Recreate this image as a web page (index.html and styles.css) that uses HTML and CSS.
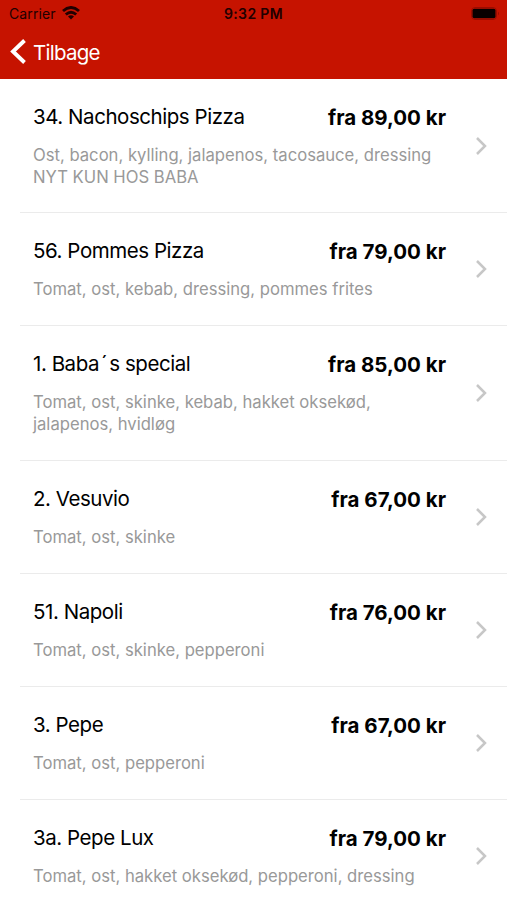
FILE: index.html
```html
<!DOCTYPE html>
<html lang="da">
<head>
<meta charset="utf-8">
<title>Menu</title>
<link rel="stylesheet" href="styles.css">
</head>
<body>
<header class="header">
  <div class="status">
    <div class="carrier"><span class="carrier-name">Carrier</span>
      <svg class="wifi" width="18" height="14" viewBox="0 0 18 14" fill="none" stroke="#210000" stroke-width="2.900"><path d="M1 5Q9-2 17 5M3.800 8.500Q9 4 14.200 8.500"/><path d="M9 13.500L6 10.500Q9 8 12 10.500Z" fill="#210000" stroke="none"/></svg>
    </div>
    <span class="clock">9:32 PM</span>
    <svg class="battery" width="29" height="13" viewBox="0 0 29 13"><rect x=".5" y=".5" width="25" height="12" rx="3.500" fill="none" stroke="#9b0c00"/><rect x="1.500" y="1.800" width="23" height="9.400" rx="1.800" fill="#080000"/><path d="M27 4.500Q29 6.500 27 8.500Z" fill="#9b0c00"/></svg>
  </div>
  <nav class="nav">
    <svg class="back" width="16" height="28" viewBox="0 0 16 28" fill="none" stroke="#fff" stroke-width="3.900"><path d="M14.500 2.500L3 13.500L14.500 24.500"/></svg>
    <span class="back-label">Tilbage</span>
  </nav>
</header>
<main class="list">
  <article class="item tall first"><div class="info"><div class="line"><h2 class="name">34. Nachoschips Pizza</h2><span class="price">fra 89,00 kr</span></div><p class="desc">Ost, bacon, kylling, jalapenos, tacosauce, dressing<br>NYT KUN HOS BABA</p></div><svg class="chevron" viewBox="0 0 12 20"><path d="M2 2L10 10L2 18"/></svg></article>
  <article class="item"><div class="info"><div class="line"><h2 class="name">56. Pommes Pizza</h2><span class="price">fra 79,00 kr</span></div><p class="desc">Tomat, ost, kebab, dressing, pommes frites</p></div><svg class="chevron" viewBox="0 0 12 20"><path d="M2 2L10 10L2 18"/></svg></article>
  <article class="item tall"><div class="info"><div class="line"><h2 class="name">1. Baba<span class="accent">´</span>s special</h2><span class="price">fra 85,00 kr</span></div><p class="desc">Tomat, ost, skinke, kebab, hakket oksekød,<br>jalapenos, hvidløg</p></div><svg class="chevron" viewBox="0 0 12 20"><path d="M2 2L10 10L2 18"/></svg></article>
  <article class="item"><div class="info"><div class="line"><h2 class="name">2. Vesuvio</h2><span class="price">fra 67,00 kr</span></div><p class="desc">Tomat, ost, skinke</p></div><svg class="chevron" viewBox="0 0 12 20"><path d="M2 2L10 10L2 18"/></svg></article>
  <article class="item"><div class="info"><div class="line"><h2 class="name">51. Napoli</h2><span class="price">fra 76,00 kr</span></div><p class="desc">Tomat, ost, skinke, pepperoni</p></div><svg class="chevron" viewBox="0 0 12 20"><path d="M2 2L10 10L2 18"/></svg></article>
  <article class="item"><div class="info"><div class="line"><h2 class="name">3. Pepe</h2><span class="price">fra 67,00 kr</span></div><p class="desc">Tomat, ost, pepperoni</p></div><svg class="chevron" viewBox="0 0 12 20"><path d="M2 2L10 10L2 18"/></svg></article>
  <article class="item"><div class="info"><div class="line"><h2 class="name">3a. Pepe Lux</h2><span class="price">fra 79,00 kr</span></div><p class="desc">Tomat, ost, hakket oksekød, pepperoni, dressing</p></div><svg class="chevron" viewBox="0 0 12 20"><path d="M2 2L10 10L2 18"/></svg></article>
</main>
</body>
</html>
```
FILE: styles.css
```css
* { box-sizing: border-box; }
body { margin: 0; height: 900px; overflow: hidden; background: #fff; font-family: Inter, "Liberation Sans", sans-serif; }
.header { height: 79px; background: #c61300; }
.status { height: 27px; padding: 0 7px 0 9px; display: grid; grid-template-columns: 1fr auto 1fr; align-items: center; color: #210000; font-size: 14px; }
.carrier { display: flex; align-items: center; gap: 6px; letter-spacing: .1px; }
.wifi { margin-top: -2px; }
.clock { margin-left: -2px; font-weight: 600; letter-spacing: .35px; }
.battery { justify-self: end; }
.nav { height: 50px; padding-left: 10px; display: flex; align-items: center; gap: 7px; color: #fff; font-size: 20.500px; letter-spacing: -.75px; }
.item { height: 113px; margin-left: 20px; padding: 24px 20px 0 13px; border-bottom: 1px solid #ebebeb; display: flex; }
.tall { height: 135px; }
.first { height: 134px; }
.info { width: 413px; }
.line { display: flex; justify-content: space-between; height: 28px; line-height: 28px; }
.name { margin: 0; font-size: 20.500px; font-weight: 400; letter-spacing: -.45px; white-space: nowrap; }
.accent { margin: 0 2px; }
.price { padding-top: 1px; font-size: 20.500px; font-weight: 700; white-space: nowrap; }
.desc { margin: 13px 0 0; font-size: 16.650px; line-height: 22px; color: #999; white-space: nowrap; }
.chevron { width: 12px; height: 20px; margin: auto 0 auto auto; transform: translateY(-12px); fill: none; stroke: #c7c7c7; stroke-width: 2.500; }
```
